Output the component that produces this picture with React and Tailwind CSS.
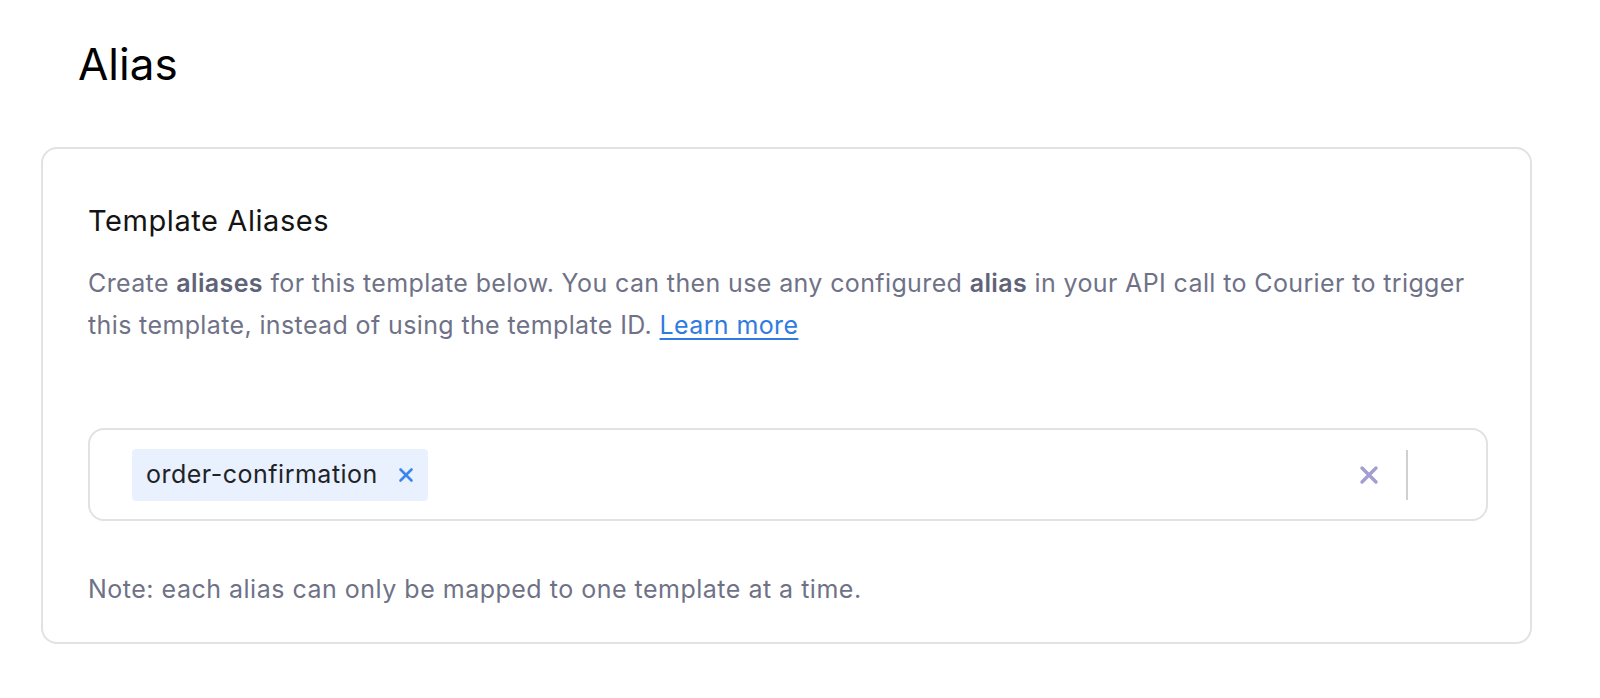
import React from 'react';

const App = () => {
  return (
    <div className="min-h-screen bg-white font-['Inter',sans-serif]">
      <div className="pl-[41px] pt-[36px]">
        <h1 className="pl-[37px] text-[44px] leading-[56px] font-normal text-black">Alias</h1>

        <div className="mt-[55px] w-[1491px] rounded-[16px] border-2 border-[#e1e1e6] px-[45px] pt-[54px] pb-[37px]">
          <h2 className="text-[29px] leading-[36px] tracking-[0.02em] font-normal text-[#141414]">Template Aliases</h2>
          <p className="mt-[23px] text-[25px] leading-[42px] tracking-[0.015em] text-[#6f7287]">
            Create <strong className="font-semibold text-[#5f6378]">aliases</strong> for this template below. You can then use any configured{' '}
            <strong className="font-semibold text-[#5f6378]">alias</strong> in your API call to Courier to trigger this template, instead of using the template ID.{' '}
            <a href="#" className="text-[#2f7be0] underline underline-offset-4">Learn more</a>
          </p>

          <div className="mt-[82px] flex h-[93px] w-[1400px] items-center rounded-[16px] border-2 border-[#e1e1e6] pl-[42px] pr-[78px]">
            <div className="flex flex-1 items-center">
              <div className="flex h-[52px] items-center gap-[20px] rounded-[4px] bg-[#e8f1fd] pl-[14px] pr-[14px]">
                <span className="text-[25px] tracking-[0.02em] text-[#1f2328]">order-confirmation</span>
                <svg width="16" height="16" viewBox="0 0 16 16" className="text-[#3b86ea]">
                  <path d="M2.5 2.5L13.5 13.5M13.5 2.5L2.5 13.5" stroke="currentColor" strokeWidth="2.6" strokeLinecap="round" />
                </svg>
              </div>
            </div>
            <div className="flex items-center gap-[26px]">
              <svg width="22" height="22" viewBox="0 0 22 22" className="text-[#a39dd1]">
                <path d="M4 4L18 18M18 4L4 18" stroke="currentColor" strokeWidth="3.4" strokeLinecap="round" />
              </svg>
              <div className="h-[50px] w-[2px] bg-[#cfcfd4]" />
            </div>
          </div>

          <p className="mt-[52px] text-[25px] leading-[32px] tracking-[0.02em] text-[#6f7287]">
            Note: each alias can only be mapped to one template at a time.
          </p>
        </div>
      </div>
    </div>
  );
};

export default App;
